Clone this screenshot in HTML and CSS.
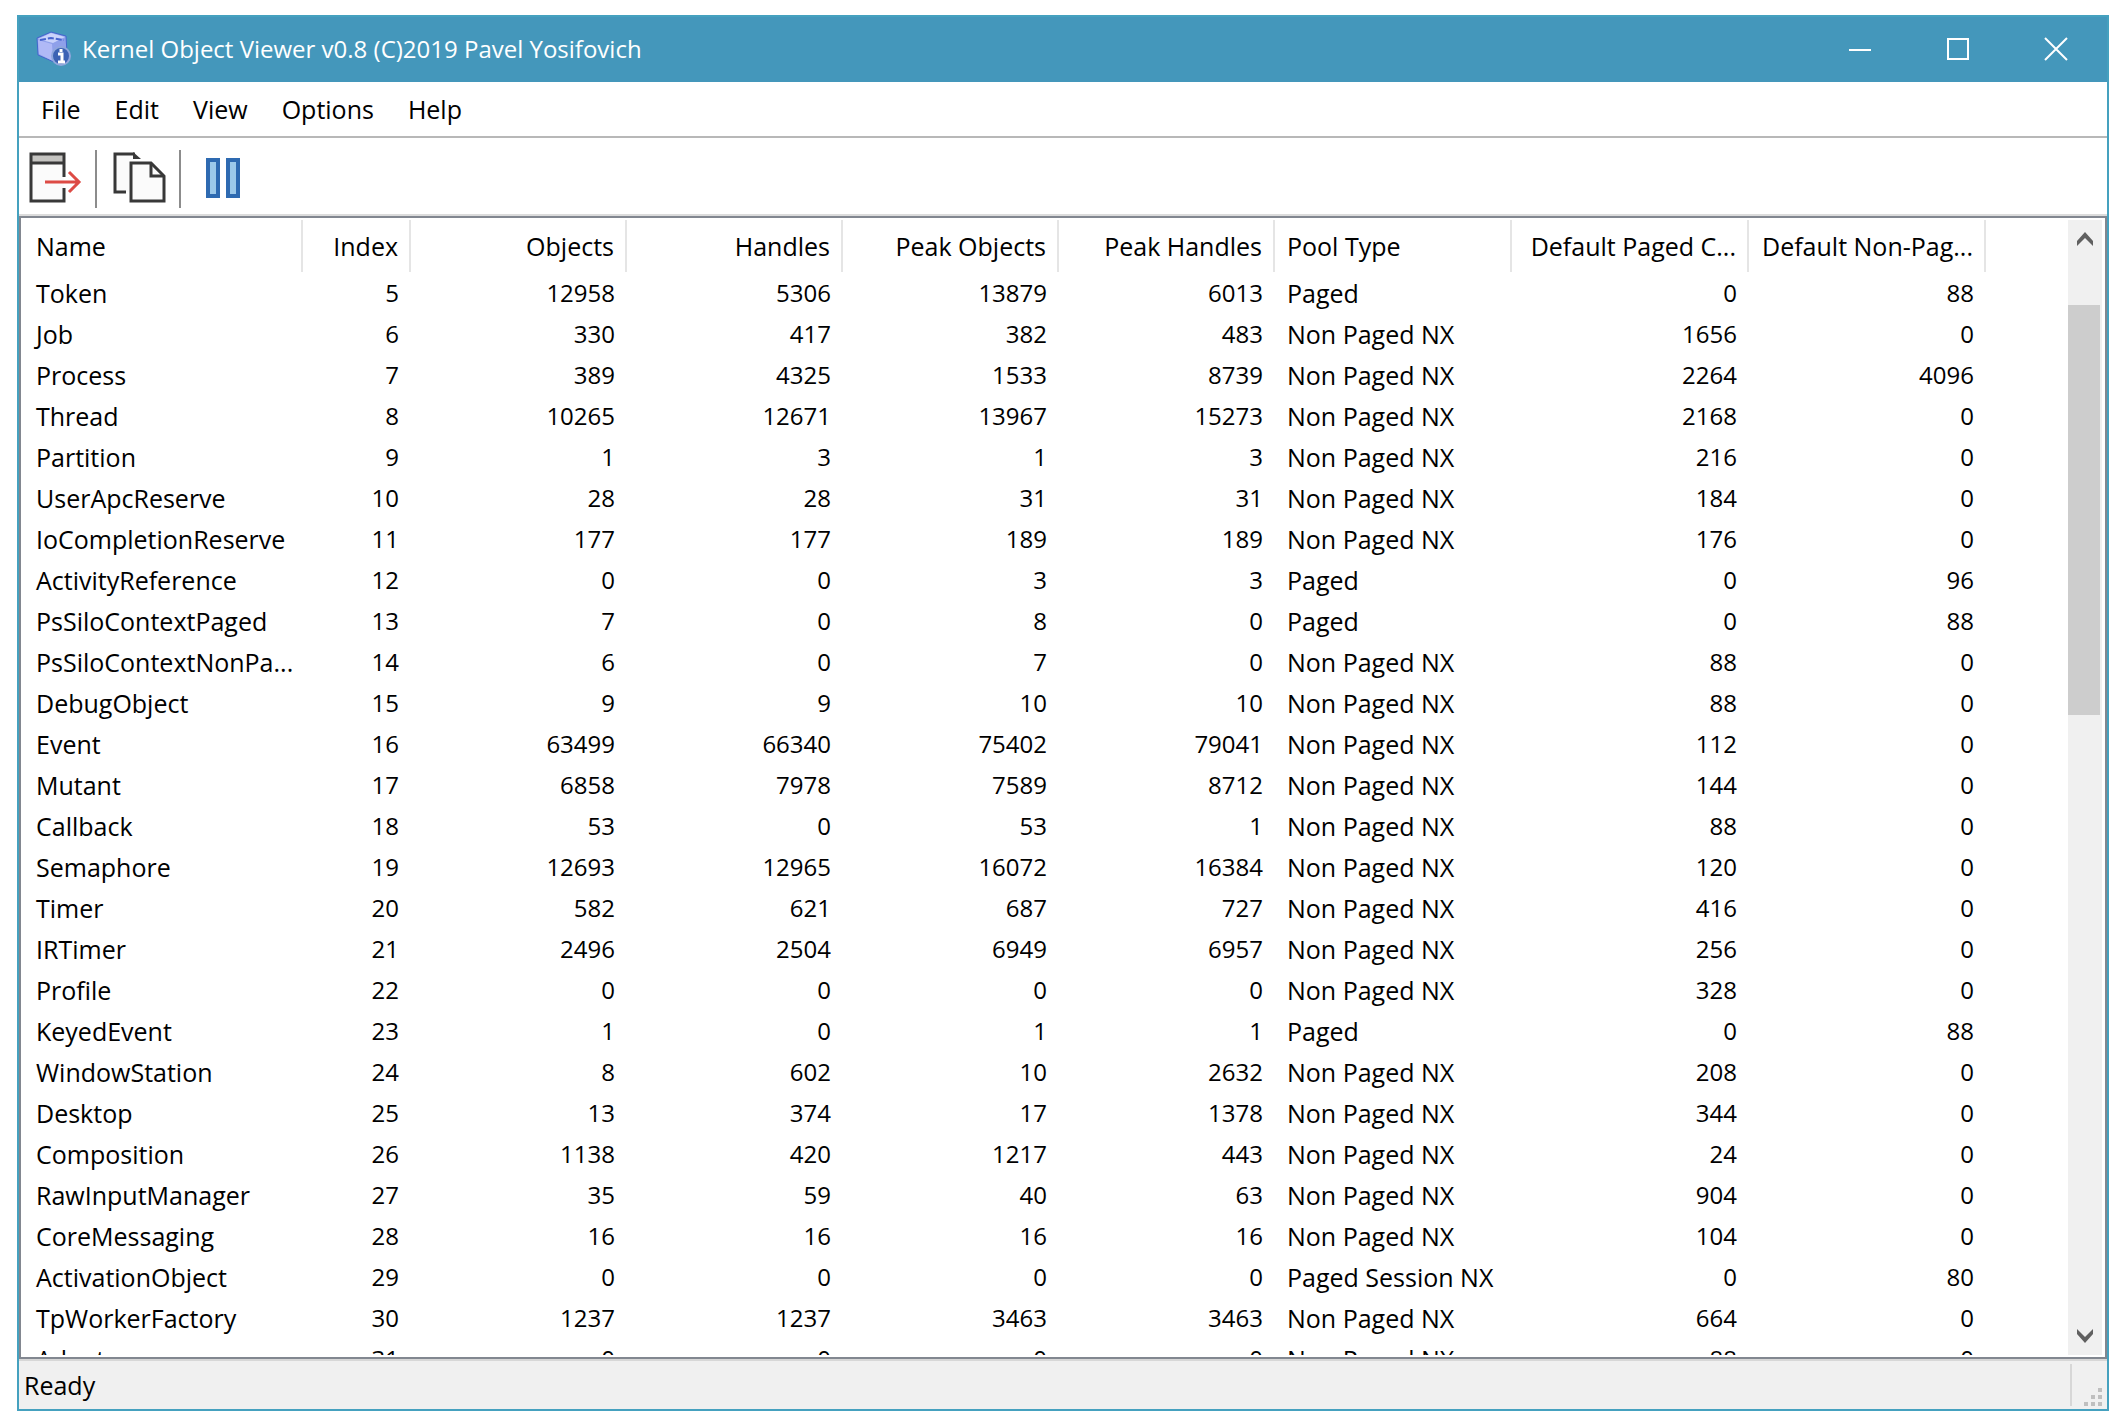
FILE: index.html
```html
<!DOCTYPE html>
<html lang="en">
<head>
    <meta charset="UTF-8">
    <title>Kernel Object Viewer</title>
    <link rel="stylesheet" href="styles.css">
</head>
<body>
    <div class="window">
        <header class="titlebar">
            <svg class="app-icon" viewBox="0 0 36 36" aria-hidden="true">
                <path d="M2 7 L16 1 L31 5 L32 22 L19 31 L3 24 Z" fill="#8fa0ea" stroke="#4166cc" stroke-width="1"/>
                <path d="M3 8 L16 2 L30 6 L18 12 Z" fill="#c9d2fb"/>
                <path d="M3 9 L17 13 L18 30 L4 23 Z" fill="#b0b9f6"/>
                <path d="M5 9 L16 7 L29 9" fill="none" stroke="#4763cf" stroke-width="2" stroke-dasharray="6 2"/>
                <circle cx="26" cy="25" r="9" fill="#3c62b4" stroke="#8fa6dc" stroke-width="2"/>
                <path d="M26 18v3M23 23h4v7M23 31h7" fill="none" stroke="#ffffff" stroke-width="3"/>
            </svg>
            <h1 class="title">Kernel Object Viewer v0.8 (C)2019 Pavel Yosifovich</h1>
            <div class="window-controls">
                <button type="button" aria-label="Minimize">
                    <svg viewBox="0 0 24 24"><path d="M1 13h22"/></svg>
                </button>
                <button type="button" aria-label="Maximize">
                    <svg viewBox="0 0 24 24"><path d="M2 2h20v20H2z"/></svg>
                </button>
                <button type="button" aria-label="Close">
                    <svg viewBox="0 0 24 24"><path d="M1 1l22 22M23 1L1 23"/></svg>
                </button>
            </div>
        </header>

        <nav class="menubar">
            <button type="button">File</button>
            <button type="button">Edit</button>
            <button type="button">View</button>
            <button type="button">Options</button>
            <button type="button">Help</button>
        </nav>

        <div class="toolbar">
            <button type="button" aria-label="Exit">
                <svg viewBox="0 0 58 58">
                    <path d="M6 4h33v47H6z" fill="#fbfbfb"/>
                    <path d="M6 4h33v9H6z" fill="#c4c3c0"/>
                    <path d="M39 27V4H6v47h33V38M6 13h33" fill="none" stroke="#383838" stroke-width="3"/>
                    <path d="M20 32h34M44 22l10 10-10 10" fill="none" stroke="#dd4b45" stroke-width="3"/>
                </svg>
            </button>
            <span class="separator"></span>
            <button type="button" aria-label="Copy">
                <svg viewBox="0 0 58 58">
                    <path d="M6 4h19l6 6H20v32H6z" fill="#fbfbfb"/>
                    <path d="M17 42H6V4h20" fill="none" stroke="#383838" stroke-width="3"/>
                    <path d="M24 2l8 7h-8z" fill="#383838"/>
                    <path d="M22 13h20l13 13v25H22z" fill="#fbfbfb" stroke="#383838" stroke-width="3"/>
                    <path d="M42 13v13h13" fill="none" stroke="#383838" stroke-width="3"/>
                </svg>
            </button>
            <span class="separator"></span>
            <button type="button" aria-label="Pause">
                <svg viewBox="0 0 58 58">
                    <path d="M15 10h10v36H15zM35 10h10v36H35z" fill="#9cc9ea" stroke="#2e6ab1" stroke-width="4"/>
                </svg>
            </button>
        </div>

        <main class="list">
            <div class="list-view">
                <table>
                    <colgroup>
                        <col class="col-name">
                        <col class="col-index">
                        <col class="col-count">
                        <col class="col-count">
                        <col class="col-count">
                        <col class="col-count">
                        <col class="col-pool">
                        <col class="col-charge">
                        <col class="col-charge">
                        <col>
                    </colgroup>
                    <thead>
                        <tr><th>Name</th><th>Index</th><th>Objects</th><th>Handles</th><th>Peak Objects</th><th>Peak Handles</th><th>Pool Type</th><th>Default Paged C...</th><th>Default Non-Pag...</th></tr>
                    </thead>
                    <tbody>
                        <tr><td>Token</td><td>5</td><td>12958</td><td>5306</td><td>13879</td><td>6013</td><td>Paged</td><td>0</td><td>88</td></tr>
                        <tr><td>Job</td><td>6</td><td>330</td><td>417</td><td>382</td><td>483</td><td>Non Paged NX</td><td>1656</td><td>0</td></tr>
                        <tr><td>Process</td><td>7</td><td>389</td><td>4325</td><td>1533</td><td>8739</td><td>Non Paged NX</td><td>2264</td><td>4096</td></tr>
                        <tr><td>Thread</td><td>8</td><td>10265</td><td>12671</td><td>13967</td><td>15273</td><td>Non Paged NX</td><td>2168</td><td>0</td></tr>
                        <tr><td>Partition</td><td>9</td><td>1</td><td>3</td><td>1</td><td>3</td><td>Non Paged NX</td><td>216</td><td>0</td></tr>
                        <tr><td>UserApcReserve</td><td>10</td><td>28</td><td>28</td><td>31</td><td>31</td><td>Non Paged NX</td><td>184</td><td>0</td></tr>
                        <tr><td>IoCompletionReserve</td><td>11</td><td>177</td><td>177</td><td>189</td><td>189</td><td>Non Paged NX</td><td>176</td><td>0</td></tr>
                        <tr><td>ActivityReference</td><td>12</td><td>0</td><td>0</td><td>3</td><td>3</td><td>Paged</td><td>0</td><td>96</td></tr>
                        <tr><td>PsSiloContextPaged</td><td>13</td><td>7</td><td>0</td><td>8</td><td>0</td><td>Paged</td><td>0</td><td>88</td></tr>
                        <tr><td>PsSiloContextNonPa...</td><td>14</td><td>6</td><td>0</td><td>7</td><td>0</td><td>Non Paged NX</td><td>88</td><td>0</td></tr>
                        <tr><td>DebugObject</td><td>15</td><td>9</td><td>9</td><td>10</td><td>10</td><td>Non Paged NX</td><td>88</td><td>0</td></tr>
                        <tr><td>Event</td><td>16</td><td>63499</td><td>66340</td><td>75402</td><td>79041</td><td>Non Paged NX</td><td>112</td><td>0</td></tr>
                        <tr><td>Mutant</td><td>17</td><td>6858</td><td>7978</td><td>7589</td><td>8712</td><td>Non Paged NX</td><td>144</td><td>0</td></tr>
                        <tr><td>Callback</td><td>18</td><td>53</td><td>0</td><td>53</td><td>1</td><td>Non Paged NX</td><td>88</td><td>0</td></tr>
                        <tr><td>Semaphore</td><td>19</td><td>12693</td><td>12965</td><td>16072</td><td>16384</td><td>Non Paged NX</td><td>120</td><td>0</td></tr>
                        <tr><td>Timer</td><td>20</td><td>582</td><td>621</td><td>687</td><td>727</td><td>Non Paged NX</td><td>416</td><td>0</td></tr>
                        <tr><td>IRTimer</td><td>21</td><td>2496</td><td>2504</td><td>6949</td><td>6957</td><td>Non Paged NX</td><td>256</td><td>0</td></tr>
                        <tr><td>Profile</td><td>22</td><td>0</td><td>0</td><td>0</td><td>0</td><td>Non Paged NX</td><td>328</td><td>0</td></tr>
                        <tr><td>KeyedEvent</td><td>23</td><td>1</td><td>0</td><td>1</td><td>1</td><td>Paged</td><td>0</td><td>88</td></tr>
                        <tr><td>WindowStation</td><td>24</td><td>8</td><td>602</td><td>10</td><td>2632</td><td>Non Paged NX</td><td>208</td><td>0</td></tr>
                        <tr><td>Desktop</td><td>25</td><td>13</td><td>374</td><td>17</td><td>1378</td><td>Non Paged NX</td><td>344</td><td>0</td></tr>
                        <tr><td>Composition</td><td>26</td><td>1138</td><td>420</td><td>1217</td><td>443</td><td>Non Paged NX</td><td>24</td><td>0</td></tr>
                        <tr><td>RawInputManager</td><td>27</td><td>35</td><td>59</td><td>40</td><td>63</td><td>Non Paged NX</td><td>904</td><td>0</td></tr>
                        <tr><td>CoreMessaging</td><td>28</td><td>16</td><td>16</td><td>16</td><td>16</td><td>Non Paged NX</td><td>104</td><td>0</td></tr>
                        <tr><td>ActivationObject</td><td>29</td><td>0</td><td>0</td><td>0</td><td>0</td><td>Paged Session NX</td><td>0</td><td>80</td></tr>
                        <tr><td>TpWorkerFactory</td><td>30</td><td>1237</td><td>1237</td><td>3463</td><td>3463</td><td>Non Paged NX</td><td>664</td><td>0</td></tr>
                        <tr><td>Adapter</td><td>31</td><td>0</td><td>0</td><td>0</td><td>0</td><td>Non Paged NX</td><td>88</td><td>0</td></tr>
                    </tbody>
                </table>
            </div>
            <div class="scrollbar">
                <button type="button" aria-label="Scroll up">
                    <svg viewBox="0 0 16 14"><path d="M0 9l8-9 8 9v5l-8-8-8 8z"/></svg>
                </button>
                <div class="track">
                    <div class="thumb"></div>
                </div>
                <button type="button" aria-label="Scroll down">
                    <svg viewBox="0 0 16 14"><path d="M0 5l8 9 8-9V0L8 8 0 0z"/></svg>
                </button>
            </div>
        </main>

        <footer class="statusbar">
            <span class="status-text">Ready</span>
            <span class="grip">
                <svg viewBox="0 0 18 18" aria-hidden="true">
                    <path d="M14 0h4v4h-4zM7 7h4v4H7zM14 7h4v4h-4zM0 14h4v4H0zM7 14h4v4H7zM14 14h4v4h-4z"/>
                </svg>
            </span>
        </footer>
    </div>
</body>
</html>
```
FILE: styles.css
```css
* {
    box-sizing: border-box;
}

body {
    margin: 0;
    height: 100vh;
    padding: 15px 15px 11px 17px;
    background-color: #ffffff;
    color: #000000;
    font-family: "Open Sans", "Noto Sans", sans-serif;
    font-size: 25px;
}

button {
    padding: 0;
    border: none;
    background: none;
    color: inherit;
    font: inherit;
}

svg {
    display: block;
}

.window {
    display: flex;
    flex-direction: column;
    height: 100%;
    border: 2px solid #45a1bf;
    background-color: #ffffff;
}

.titlebar {
    display: flex;
    align-items: center;
    height: 65px;
    flex-shrink: 0;
    padding: 0 2px 2px 16px;
    background-color: #4497bb;
    color: #ffffff;
}

.app-icon {
    width: 36px;
    height: 36px;
    margin-right: 11px;
}

.title {
    flex: 1;
    margin: 0;
    font-size: 24px;
    font-weight: normal;
    white-space: nowrap;
}

.window-controls {
    display: flex;
    height: 100%;
}

.window-controls button {
    display: flex;
    align-items: center;
    justify-content: center;
    width: 98px;
}

.window-controls svg {
    width: 24px;
    height: 24px;
    fill: none;
    stroke: #ffffff;
    stroke-width: 2;
}

.menubar {
    display: flex;
    align-items: center;
    gap: 34px;
    height: 56px;
    flex-shrink: 0;
    padding-left: 22px;
    border-bottom: 2px solid #b8b8b8;
}

.toolbar {
    display: flex;
    gap: 12px;
    flex-shrink: 0;
    padding: 12px 6px 6px;
    border-bottom: 2px solid #dcdcdc;
}

.toolbar svg {
    width: 58px;
    height: 58px;
}

.separator {
    width: 2px;
    background-color: #8c8c8c;
}

.list {
    display: flex;
    flex: 1;
    min-height: 0;
    padding: 2px 3px 2px 2px;
    border: 2px solid #828790;
}

.list-view {
    flex: 1;
    overflow: hidden;
}

table {
    width: 100%;
    table-layout: fixed;
    border-collapse: separate;
    border-spacing: 0;
}

.col-name {
    width: 280px;
}

.col-index {
    width: 108px;
}

.col-count {
    width: 216px;
}

.col-pool,
.col-charge {
    width: 237px;
}

th, td {
    height: 41px;
    padding: 0 12px;
    line-height: 40px;
    font-weight: normal;
    text-align: right;
    white-space: nowrap;
}

th {
    height: 52px;
    padding-right: 11px;
    border-right: 2px solid #e5e5e5;
}

td {
    padding-right: 12px;
    font-size: 24px;
}

th:nth-child(1), td:nth-child(1),
th:nth-child(7), td:nth-child(7) {
    font-size: 25px;
    text-align: left;
}

th:nth-child(1), td:nth-child(1) {
    padding-left: 13px;
}

.scrollbar {
    display: flex;
    flex-direction: column;
    width: 34px;
    background-color: #f0f0f0;
}

.scrollbar button {
    display: flex;
    align-items: center;
    justify-content: center;
    height: 38px;
}

.scrollbar svg {
    width: 16px;
    height: 14px;
    fill: #606060;
}

.track {
    flex: 1;
    padding: 47px 2px 0 0;
}

.thumb {
    height: 40.5%;
    background-color: #cdcdcd;
}

.statusbar {
    display: flex;
    align-items: center;
    justify-content: space-between;
    height: 50px;
    flex-shrink: 0;
    padding-left: 5px;
    border-top: 2px solid #d7d7d7;
    background-color: #f0f0f0;
}

.grip {
    display: flex;
    align-items: flex-end;
    justify-content: flex-end;
    width: 37px;
    height: 42px;
    padding-right: 5px;
    border-left: 2px solid #d7d7d7;
}

.grip svg {
    width: 18px;
    height: 18px;
    fill: #bfbfbf;
}
```
